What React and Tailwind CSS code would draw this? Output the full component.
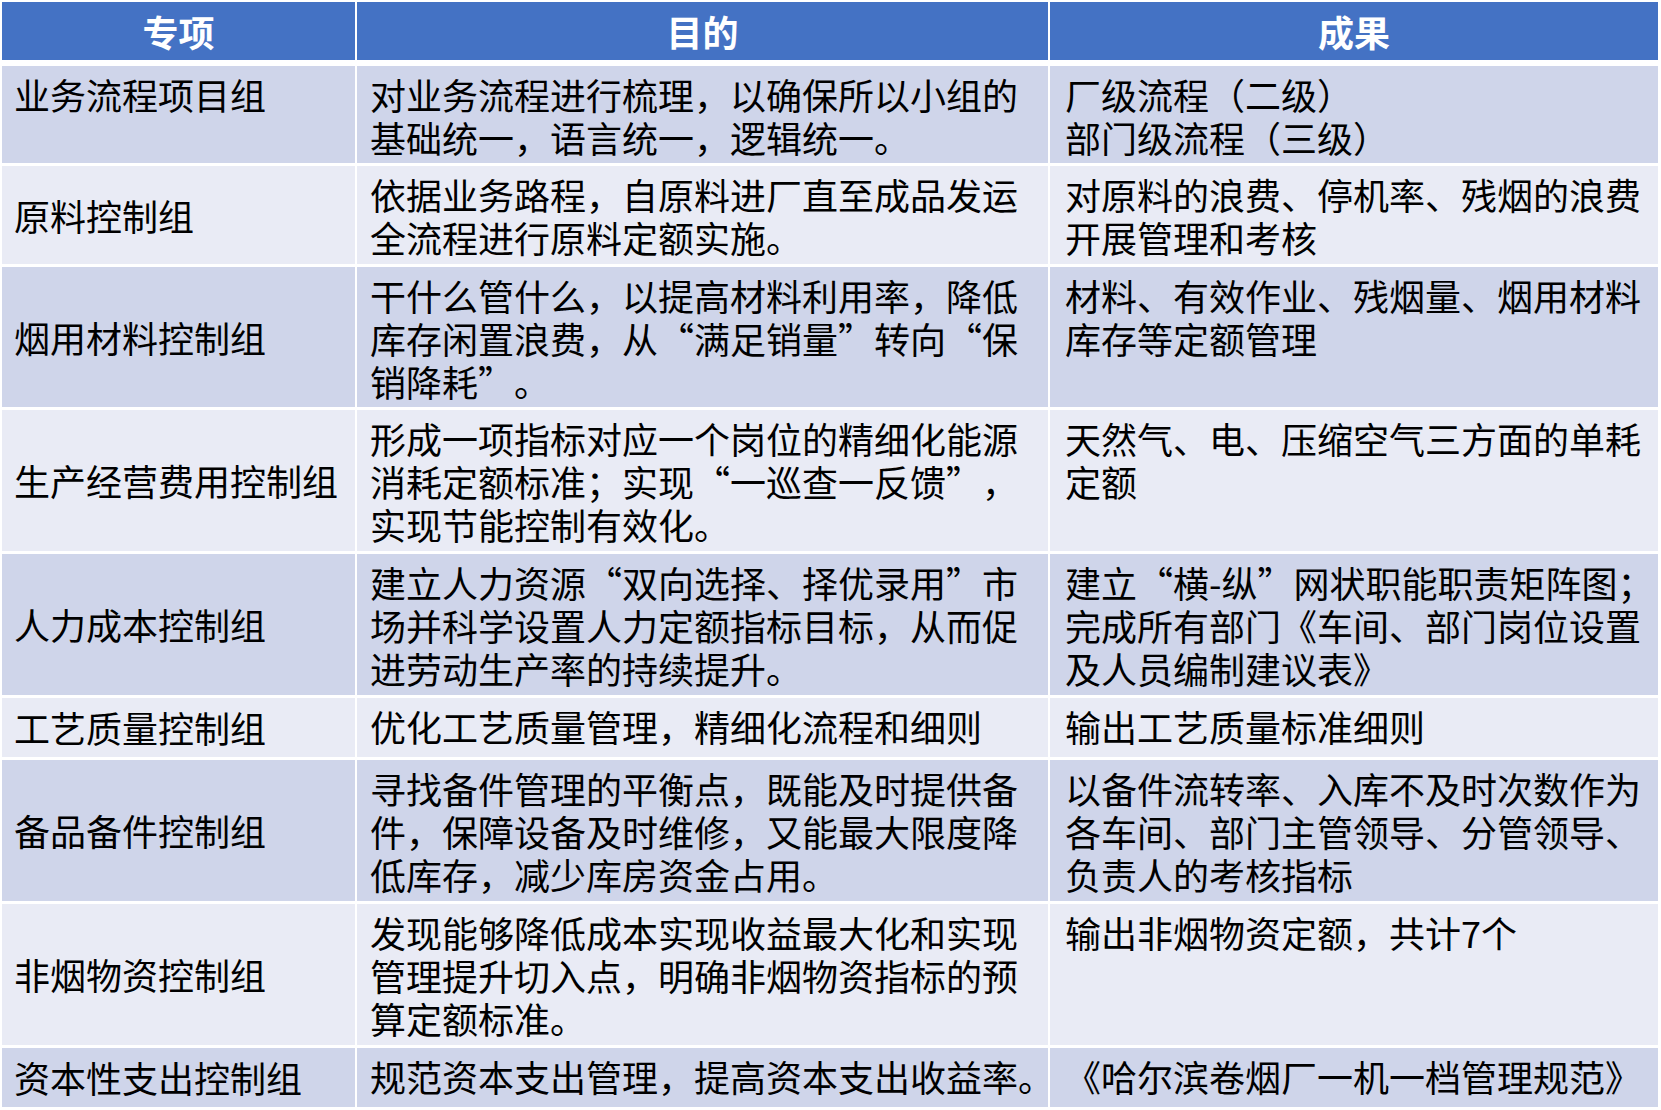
import React from "react";

const rows = [
  {
    h: "h-[97px]",
    bg: "bg-[#CFD5EA]",
    top: true,
    name: "业务流程项目组",
    goal: ["对业务流程进行梳理，以确保所以小组的", "基础统一，语言统一，逻辑统一。"],
    result: ["厂级流程（二级）", "部门级流程（三级）"],
  },
  {
    h: "h-[98px]",
    bg: "bg-[#E9EBF5]",
    name: "原料控制组",
    goal: ["依据业务路程，自原料进厂直至成品发运", "全流程进行原料定额实施。"],
    result: ["对原料的浪费、停机率、残烟的浪费", "开展管理和考核"],
  },
  {
    h: "h-[140px]",
    bg: "bg-[#CFD5EA]",
    name: "烟用材料控制组",
    goal: ["干什么管什么，以提高材料利用率，降低", "库存闲置浪费，从“满足销量”转向“保", "销降耗”。"],
    result: ["材料、有效作业、残烟量、烟用材料", "库存等定额管理"],
  },
  {
    h: "h-[141px]",
    bg: "bg-[#E9EBF5]",
    name: "生产经营费用控制组",
    goal: ["形成一项指标对应一个岗位的精细化能源", "消耗定额标准；实现“一巡查一反馈”，", "实现节能控制有效化。"],
    result: ["天然气、电、压缩空气三方面的单耗", "定额"],
  },
  {
    h: "h-[141px]",
    bg: "bg-[#CFD5EA]",
    name: "人力成本控制组",
    goal: ["建立人力资源“双向选择、择优录用”市", "场并科学设置人力定额指标目标，从而促", "进劳动生产率的持续提升。"],
    result: ["建立“横-纵”网状职能职责矩阵图；", "完成所有部门《车间、部门岗位设置", "及人员编制建议表》"],
  },
  {
    h: "h-[59px]",
    bg: "bg-[#E9EBF5]",
    name: "工艺质量控制组",
    goal: ["优化工艺质量管理，精细化流程和细则"],
    result: ["输出工艺质量标准细则"],
  },
  {
    h: "h-[141px]",
    bg: "bg-[#CFD5EA]",
    name: "备品备件控制组",
    goal: ["寻找备件管理的平衡点，既能及时提供备", "件，保障设备及时维修，又能最大限度降", "低库存，减少库房资金占用。"],
    result: ["以备件流转率、入库不及时次数作为", "各车间、部门主管领导、分管领导、", "负责人的考核指标"],
  },
  {
    h: "h-[141px]",
    bg: "bg-[#E9EBF5]",
    name: "非烟物资控制组",
    goal: ["发现能够降低成本实现收益最大化和实现", "管理提升切入点，明确非烟物资指标的预", "算定额标准。"],
    result: ["输出非烟物资定额，共计7个"],
  },
  {
    h: "h-[59px]",
    bg: "bg-[#CFD5EA]",
    name: "资本性支出控制组",
    goal: ["规范资本支出管理，提高资本支出收益率。"],
    result: ["《哈尔滨卷烟厂一机一档管理规范》"],
  },
];

function Lines({ lines }) {
  return lines.map((l, i) => (
    <div key={i} className="whitespace-nowrap">
      {l}
    </div>
  ));
}

export default function App() {
  return (
    <div
      className="w-[1661px] h-[1110px] bg-white pt-[2px] pl-[2px] text-black text-[36px] leading-[43px] [text-spacing-trim:space-all]"
      style={{ fontFamily: '"Noto Sans CJK SC", "Noto Sans", sans-serif' }}
    >
      <div className="grid grid-cols-[353px_691px_608px] gap-x-[2px] h-[58px] mb-[6px]">
        <div className="bg-[#4472C4] flex items-center justify-center font-bold text-white">专项</div>
        <div className="bg-[#4472C4] flex items-center justify-center font-bold text-white">目的</div>
        <div className="bg-[#4472C4] flex items-center justify-center font-bold text-white">成果</div>
      </div>
      <div className="flex flex-col gap-y-[3px]">
        {rows.map((r, i) => (
          <div key={i} className={`grid grid-cols-[353px_691px_608px] gap-x-[2px] ${r.h}`}>
            <div
              className={`${r.bg} pl-[12px] flex ${r.top ? "items-start pt-[7px]" : "items-center"} whitespace-nowrap`}
            >
              {r.name}
            </div>
            <div className={`${r.bg} pl-[13px] pt-[7px]`}>
              <Lines lines={r.goal} />
            </div>
            <div className={`${r.bg} pl-[15px] pt-[7px]`}>
              <Lines lines={r.result} />
            </div>
          </div>
        ))}
      </div>
    </div>
  );
}
